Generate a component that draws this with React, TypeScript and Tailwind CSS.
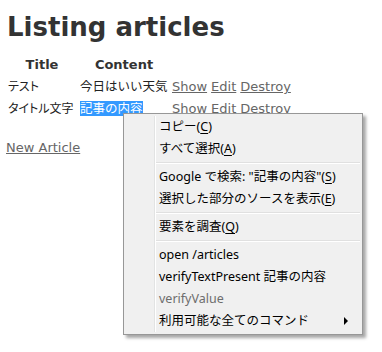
import { Fragment } from 'react';

const pageFont = "font-['DejaVu_Sans','Noto_Sans_CJK_JP',sans-serif]";
const menuFont = "font-['Noto_Sans','Noto_Sans_CJK_JP',sans-serif]";

const articles = [
  { title: 'テスト', content: '今日はいい天気', selected: false },
  { title: 'タイトル文字', content: '記事の内容', selected: true },
];

type MenuItem =
  | { sep: true }
  | { sep?: false; label: string; key?: string; tail?: string; disabled?: boolean; submenu?: boolean };

const menu: MenuItem[] = [
  { label: 'コピー(', key: 'C', tail: ')' },
  { label: 'すべて選択(', key: 'A', tail: ')' },
  { sep: true },
  { label: 'Google で検索: "記事の内容"(', key: 'S', tail: ')' },
  { label: '選択した部分のソースを表示(', key: 'E', tail: ')' },
  { sep: true },
  { label: '要素を調査(', key: 'Q', tail: ')' },
  { sep: true },
  { label: 'open /articles' },
  { label: 'verifyTextPresent 記事の内容' },
  { label: 'verifyValue', disabled: true },
  { label: '利用可能な全てのコマンド', submenu: true },
];

function ContextMenu() {
  return (
    <div className={`absolute left-[123px] top-[113px] w-[240px] border border-[#979797] bg-[#f0f0f0] p-[2px] shadow-[3px_3px_3px_rgba(0,0,0,0.35)] ${menuFont}`}>
      <div className="relative">
        <div className="absolute left-[28px] top-0 bottom-0 w-[2px] border-l border-[#e2e3e3] bg-white" />
        {menu.map((item, i) =>
          item.sep ? (
            <div key={i} className="h-[6px] pl-[30px] pt-[2px]">
              <div className="h-[1px] bg-[#e0e0e0]" />
              <div className="h-[1px] bg-white" />
            </div>
          ) : (
            <div
              key={i}
              className={`relative flex h-[22px] items-center pl-[33px] text-[12.5px] leading-[22px] ${item.disabled ? 'text-[#6d6d6d]' : 'text-black'}`}
            >
              <span>
                {item.label}
                {item.key && <span className="underline underline-offset-2">{item.key}</span>}
                {item.tail}
              </span>
              {item.submenu && (
                <svg className="absolute right-[12px] top-[7px]" width="4" height="8" viewBox="0 0 4 8">
                  <path d="M0 0 L4 4 L0 8 Z" fill="#000" />
                </svg>
              )}
            </div>
          )
        )}
      </div>
    </div>
  );
}

export default function App() {
  return (
    <div className={`relative h-[352px] w-[382px] overflow-hidden bg-white pl-[5px] text-[#333] ${pageFont}`}>
      <h1 className="pt-[12px] pl-[2px] text-[26px] font-bold leading-[30px] text-[#333]">Listing articles</h1>
      <table className="mt-[11px] border-separate border-spacing-[2px] text-[13px]">
        <thead>
          <tr>
            <th className="w-[70px] p-[1px] text-center leading-[18px]">Title</th>
            <th className="w-[90px] p-[1px] text-center leading-[18px]">Content</th>
            <th />
            <th />
            <th />
          </tr>
        </thead>
        <tbody>
          {articles.map((a) => (
            <Fragment key={a.title}>
              <tr>
                <td className="p-[1px] text-[12px] leading-[18px] whitespace-nowrap text-[#222] [font-feature-settings:'palt']">{a.title}</td>
                <td className="p-[1px] text-[12.5px] leading-[18px] whitespace-nowrap text-[#222]">
                  <span className={a.selected ? 'bg-[#3399ff] text-white' : ''}>{a.content}</span>
                </td>
                <td className="p-[1px] leading-[18px]">
                  <a className="text-[#666] underline">Show</a>
                </td>
                <td className="p-[1px] leading-[18px]">
                  <a className="text-[#666] underline">Edit</a>
                </td>
                <td className="p-[1px] leading-[18px]">
                  <a className="text-[#666] underline">Destroy</a>
                </td>
              </tr>
            </Fragment>
          ))}
        </tbody>
      </table>
      <p className="mt-[18px] pl-[1px] text-[13px] leading-[18px]">
        <a className="text-[#666] underline">New Article</a>
      </p>
      <ContextMenu />
    </div>
  );
}
